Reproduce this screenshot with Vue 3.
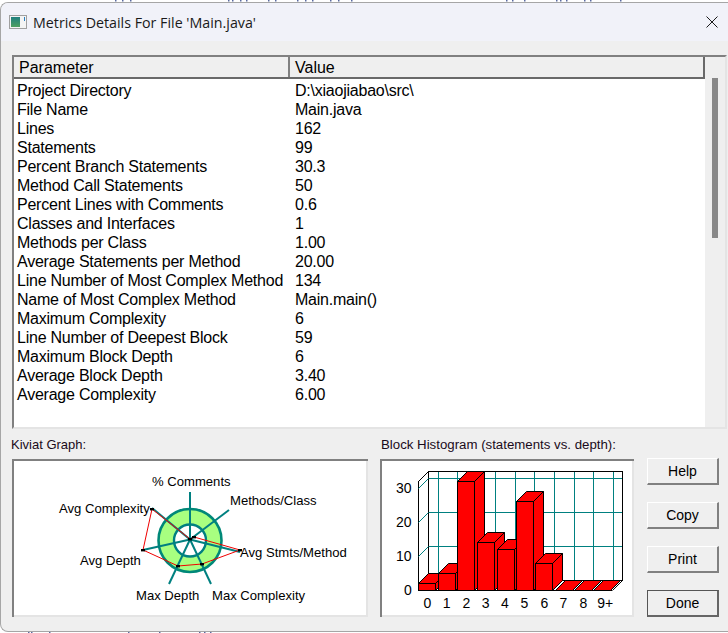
<script setup>
const rows = [
  ['Project Directory', 'D:\\xiaojiabao\\src\\'],
  ['File Name', 'Main.java'],
  ['Lines', '162'],
  ['Statements', '99'],
  ['Percent Branch Statements', '30.3'],
  ['Method Call Statements', '50'],
  ['Percent Lines with Comments', '0.6'],
  ['Classes and Interfaces', '1'],
  ['Methods per Class', '1.00'],
  ['Average Statements per Method', '20.00'],
  ['Line Number of Most Complex Method', '134'],
  ['Name of Most Complex Method', 'Main.main()'],
  ['Maximum Complexity', '6'],
  ['Line Number of Deepest Block', '59'],
  ['Maximum Block Depth', '6'],
  ['Average Block Depth', '3.40'],
  ['Average Complexity', '6.00'],
]
const buttons = ['Help', 'Copy', 'Print', 'Done']

const cx = 190
const cy = 540.5
const spokes = [[190, 492], [229, 510], [240, 552], [211, 584], [169, 584], [143, 550], [152, 508]]
const poly = [[190, 539], [194, 537], [240, 550], [202, 564], [178, 566], [143, 550], [152, 509]]
const polyPoints = poly.map((p) => p.join(',')).join(' ')
const kLabels = [
  ['% Comments', 152, 486], ['Methods/Class', 230, 505], ['Avg Complexity', 59, 513],
  ['Avg Stmts/Method', 240, 557], ['Avg Depth', 80, 565], ['Max Depth', 136, 600], ['Max Complexity', 212, 600],
]

const vGrid = [438, 457, 476, 495, 515, 534, 554, 574, 593, 613]
const hGrid = [[478, 488], [512, 522], [546, 556]]
const bars = [
  [418, 583], [438, 573], [457, 481], [477, 542], [497, 549], [516, 501], [535, 563], [555, 590], [574, 590], [593, 590],
].map(([x, t]) => {
  const l = x + 0.5, r = x + 17.5, top = t + 0.5, b = 590.5, d = 10
  return {
    x: l, y: top, w: r - l, h: b - top,
    top: `${l},${top} ${l + d},${top - d} ${r + d},${top - d} ${r},${top}`,
    side: `${r},${top} ${r + d},${top - d} ${r + d},${b - d} ${r},${b}`,
  }
})
const yTicks = [['30', 396, 493], ['20', 396, 527], ['10', 396, 561], ['0', 404, 595]]
const xTicks = [['0', 427.3], ['1', 446.7], ['2', 466.3], ['3', 485.7], ['4', 505], ['5', 524.3], ['6', 544.3], ['7', 563.3], ['8', 583.3], ['9+', 605.3]]

const topBits = [115, 122, 130, 228, 232, 240, 246, 268, 275, 297, 305, 312, 330, 338, 351, 506, 512, 524, 556, 560, 566, 584, 590, 620]
const bottomBits = [28, 31, 49, 128, 159, 199, 204, 210]
</script>

<template>
  <div class="screen">
    <svg class="strip" width="728" height="2" viewBox="0 0 728 2">
      <rect v-for="x in topBits" :key="x" :x="x" y="0" width="1.5" height="1.5" fill="#5a6aa0" />
    </svg>
    <div class="window">
      <header class="titlebar">
        <svg class="appicon" width="18" height="14" viewBox="0 0 18 14">
          <defs>
            <linearGradient id="ig" x1="0" y1="0" x2="0" y2="1">
              <stop offset="0" stop-color="#1f7f7f" />
              <stop offset="1" stop-color="#4fa060" />
            </linearGradient>
          </defs>
          <rect x="0.5" y="0.5" width="17" height="13" fill="#f4f4f4" stroke="#a0a0a0" />
          <rect x="2" y="2" width="9" height="10" fill="url(#ig)" />
          <rect x="15" y="2" width="1" height="4" fill="#2a80c0" />
        </svg>
        <span class="title">Metrics Details For File 'Main.java'</span>
        <svg class="close" width="12" height="12" viewBox="0 0 12 12">
          <path d="M0.5 0.5L11.5 11.5M11.5 0.5L0.5 11.5" stroke="#1a1a1a" stroke-width="1" fill="none" />
        </svg>
      </header>
      <main class="body">
        <section class="table">
          <div class="tablemain">
            <div class="thead">
              <div class="th first">Parameter</div>
              <div class="th second">Value</div>
            </div>
            <div class="tbody">
              <div v-for="r in rows" :key="r[0]" class="row">
                <span class="c1">{{ r[0] }}</span>
                <span class="c2">{{ r[1] }}</span>
              </div>
            </div>
          </div>
          <div class="scrollbar"><div class="thumb"></div></div>
        </section>
        <section class="bottom">
          <div class="chartcol kiviat">
            <div class="caption">Kiviat Graph:</div>
            <div class="panel">
              <svg class="chart" width="356" height="158" viewBox="12 459 356 158">
                <circle :cx="cx" :cy="cy" r="31.5" fill="#a8ff80" stroke="#008878" stroke-width="2.6" />
                <circle :cx="cx" :cy="cy" r="16" fill="#fff" stroke="#008080" stroke-width="2.4" />
                <line v-for="(s, i) in spokes" :key="i" :x1="cx" :y1="cy - 1" :x2="s[0]" :y2="s[1]" stroke="#008080" stroke-width="2" />
                <polygon :points="polyPoints" fill="none" stroke="#f00000" stroke-width="1" />
                <rect v-for="(p, i) in poly" :key="'d' + i" :x="p[0] - 2" :y="p[1] - 1" width="4" height="2.4" fill="#000" />
                <text v-for="l in kLabels" :key="l[0]" :x="l[1]" :y="l[2]" class="klabel">{{ l[0] }}</text>
              </svg>
            </div>
          </div>
          <div class="chartcol hist">
            <div class="caption histcap">Block Histogram (statements vs. depth):</div>
            <div class="panel">
              <svg class="chart" width="254" height="158" viewBox="380 459 254 158">
                <g shape-rendering="crispEdges">
                  <line v-for="x in vGrid" :key="x" :x1="x + 0.5" y1="472" :x2="x + 0.5" y2="580" stroke="#008080" />
                  <line v-for="h in hGrid" :key="h[0]" x1="428" :y1="h[0] + 0.5" x2="622" :y2="h[0] + 0.5" stroke="#008080" />
                  <line x1="428" y1="580.5" x2="622" y2="580.5" stroke="#008080" />
                  <rect x="428.5" y="471.5" width="194" height="109" fill="none" stroke="#000" />
                  <line x1="418.5" y1="481" x2="418.5" y2="591" stroke="#000" />
                  <line x1="418" y1="590.5" x2="612" y2="590.5" stroke="#000" />
                </g>
                <line v-for="h in hGrid" :key="'t' + h[0]" x1="418.5" :y1="h[1] + 0.5" x2="428.5" :y2="h[0] + 0.5" stroke="#008080" />
                <line x1="418.5" y1="481.5" x2="428.5" y2="471.5" stroke="#000" />
                <line x1="612.5" y1="590.5" x2="622.5" y2="580.5" stroke="#000" />
                <g v-for="(b, i) in bars" :key="i">
                  <polygon :points="b.side" fill="#f00" stroke="#000" />
                  <polygon :points="b.top" fill="#f00" stroke="#000" />
                  <rect :x="b.x" :y="b.y" :width="b.w" :height="b.h" fill="#f00" stroke="#000" shape-rendering="crispEdges" />
                </g>
                <text v-for="t in yTicks" :key="t[0]" :x="t[1]" :y="t[2]" class="tick">{{ t[0] }}</text>
                <text v-for="t in xTicks" :key="t[0]" :x="t[1]" y="608" class="tick middle">{{ t[0] }}</text>
              </svg>
            </div>
          </div>
          <div class="buttons">
            <button v-for="b in buttons" :key="b" class="btn" :class="{ def: b === 'Done' }">{{ b }}</button>
          </div>
        </section>
      </main>
    </div>
    <svg class="strip" width="728" height="1" viewBox="0 0 728 1">
      <rect v-for="x in bottomBits" :key="x" :x="x" y="0" width="1.5" height="1" fill="#5a6aa0" />
    </svg>
  </div>
</template>

<style>
html, body { margin: 0; background: #fff; overflow: hidden; }
</style>

<style scoped>
.screen {
  width: 728px;
  height: 633px;
  background: #fff;
  overflow: hidden;
  font-family: "Liberation Sans", Arial, sans-serif;
  color: #000;
}
.strip { display: block; }
.window {
  height: 630px;
  box-sizing: border-box;
  background: #efefef;
  border: 1px solid #a6a6a6;
  border-right: 0;
  border-radius: 8px 0 0 8px;
  overflow: hidden;
  display: flex;
  flex-direction: column;
}
.titlebar {
  height: 38px;
  flex: none;
  background: #f1f2f9;
  display: flex;
  align-items: center;
  padding: 0 10px 0 8px;
}
.appicon { flex: none; }
.title {
  margin-left: 6px;
  font-family: "Open Sans", "Noto Sans", sans-serif;
  font-size: 14.25px;
  color: #1a1a1a;
  flex: 1;
}
.close { flex: none; }
.body { flex: 1; display: flex; flex-direction: column; padding: 14px 0 0 11px; }
.table {
  width: 715px;
  height: 374px;
  box-sizing: border-box;
  flex: none;
  display: flex;
  border-top: 2px solid #808080;
  border-left: 2px solid #808080;
  border-right: 2px solid #e4e4e4;
  border-bottom: 2px solid #e4e4e4;
}
.tablemain { width: 691px; display: flex; flex-direction: column; background: #fff; }
.thead { height: 22px; flex: none; display: flex; background: #efefef; border-bottom: 2px solid #696969; box-sizing: border-box; }
.th { font-size: 16px; line-height: 22px; box-sizing: border-box; padding-left: 5px; border-right: 2px solid #808080; }
.first { width: 276px; }
.second { width: 415px; border-right-color: #696969; padding-left: 5px; }
.tbody { padding-top: 2px; background: #fff; }
.row { height: 19px; display: flex; font-size: 16px; letter-spacing: -0.23px; line-height: 19px; white-space: nowrap; }
.c1 { width: 278px; padding-left: 3px; box-sizing: border-box; }
.c2 { padding-left: 3px; }
.scrollbar { width: 20px; background: #efefef; padding-top: 21px; padding-left: 7px; box-sizing: border-box; }
.thumb { width: 6px; height: 160px; background: #888; }
.bottom { display: flex; margin-top: 8px; }
.chartcol { display: flex; flex-direction: column; }
.kiviat { width: 356px; }
.hist { width: 254px; margin-left: 12px; }
.caption { height: 22px; font-size: 13px; line-height: 16px; margin-left: -1px; color: #1a0a1a; white-space: nowrap; }
.histcap { font-size: 13.25px; margin-left: 1px; }
.panel {
  box-sizing: border-box;
  height: 158px;
  background: #fff;
  overflow: hidden;
  position: relative;
  box-shadow: inset 2px 2px 0 #808080, inset -2px -2px 0 #e4e4e4;
}
.chart { display: block; }
.klabel { font-size: 13.1px; fill: #000; }
.tick { font-size: 14px; fill: #000; }
.middle { text-anchor: middle; }
.buttons { display: flex; flex-direction: column; gap: 17px; margin-left: 13px; margin-top: 21px; }
.btn {
  width: 72px;
  height: 27px;
  padding: 0;
  background: #efefef;
  font-family: "Liberation Sans", Arial, sans-serif;
  font-size: 14px;
  color: #000;
  border: 0;
  border-top: 1px solid #fff;
  border-left: 1px solid #fff;
  border-right: 2px solid #808080;
  border-bottom: 2px solid #808080;
  box-sizing: border-box;
}
.def { border: 1px solid #555; border-right: 2px solid #666; border-bottom: 2px solid #666; }
</style>
